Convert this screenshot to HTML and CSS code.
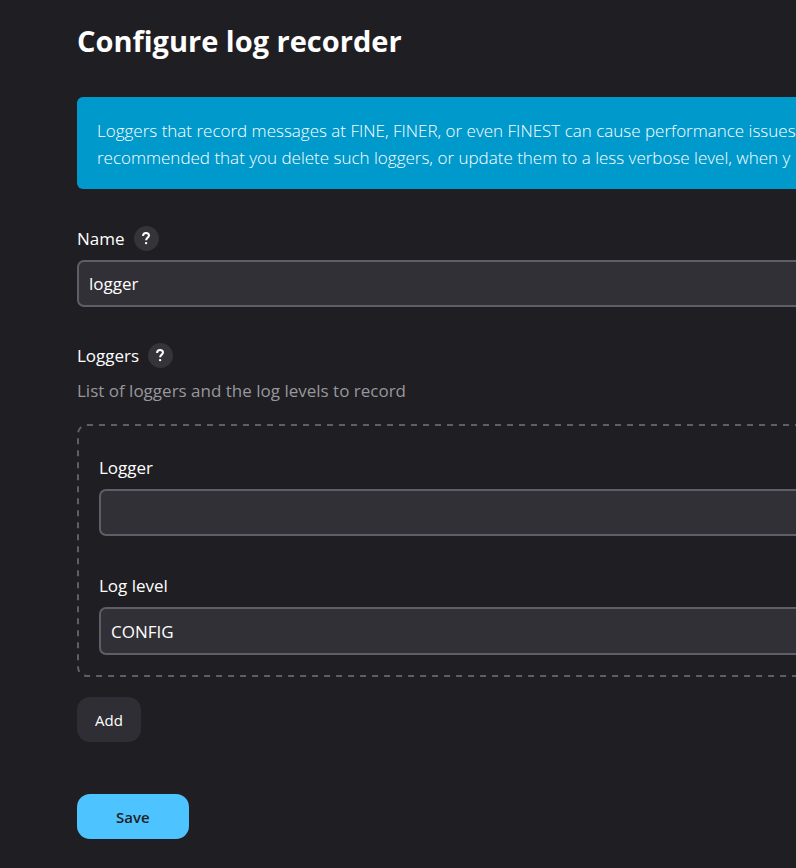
FILE: index.html
```html
<!DOCTYPE html>
<html lang="en">
<head>
<meta charset="utf-8">
<title>Configure log recorder</title>
<link rel="stylesheet" href="styles.css">
</head>
<body>
<main class="page">
  <h1 class="title">Configure log recorder</h1>
  <p class="alert">Loggers that record messages at FINE, FINER, or even FINEST can cause performance issues<br>recommended that you delete such loggers, or update them to a less verbose level, when y</p>
  <form class="form">
    <div class="field">
      <div class="label-row">
        <label for="name">Name</label>
        <button class="help" type="button" aria-label="Help for Name">
          <svg class="help-icon" viewBox="0 0 25 25" aria-hidden="true"><path d="M9.1 10.1V9.8C9.1 8 10.3 6.9 12 6.9S15 8 15 9.5C15 11.6 12.1 11.7 12.1 14.2"/><circle cx="12.1" cy="17.1" r="1.2"/></svg>
        </button>
      </div>
      <input class="control" id="name" type="text" value="logger">
    </div>
    <div class="field" role="group" aria-labelledby="loggers">
      <div class="label-row">
        <span id="loggers">Loggers</span>
        <button class="help" type="button" aria-label="Help for Loggers">
          <svg class="help-icon" viewBox="0 0 25 25" aria-hidden="true"><path d="M9.1 10.1V9.8C9.1 8 10.3 6.9 12 6.9S15 8 15 9.5C15 11.6 12.1 11.7 12.1 14.2"/><circle cx="12.1" cy="17.1" r="1.2"/></svg>
        </button>
      </div>
      <p class="description">List of loggers and the log levels to record</p>
      <div class="repeated">
        <svg class="outline" aria-hidden="true"><rect class="outline-shape" x="1" y="1" rx="9"/></svg>
        <div class="field">
          <div class="label-row"><label for="logger">Logger</label></div>
          <input class="control" id="logger" type="text">
        </div>
        <div class="field">
          <div class="label-row"><label for="level">Log level</label></div>
          <select class="control select" id="level"><option>CONFIG</option></select>
        </div>
      </div>
      <button class="button" type="button">Add</button>
    </div>
    <button class="button primary" type="button">Save</button>
  </form>
</main>
</body>
</html>
```
FILE: styles.css
```css
* { box-sizing: border-box; }

body {
  margin: 0;
  overflow-x: hidden;
  background: #1f1e23;
  color: #fff;
  font: 17px/27px "Open Sans", "Noto Sans", sans-serif;
}

/* The content column runs on past the right edge of the window. */
.page {
  margin-right: -48px;
  padding: 20px 0 29px 77px;
}

.title {
  margin: 0 0 35px;
  font-size: 29px;
  line-height: 42px;
  font-weight: 700;
}

.alert {
  margin: 0 0 36px;
  padding: 20px 20px 18px;
  border-radius: 6px;
  background: #0099cc;
  font-weight: 330;
  white-space: nowrap;
}

.form,
.field {
  display: flex;
  flex-direction: column;
}

.label-row {
  display: flex;
  align-items: center;
  gap: 9px;
  margin-bottom: 8px;
}

.form > .field:first-child { margin-bottom: 35px; }

.help {
  width: 25px;
  height: 25px;
  padding: 0;
  border: 0;
  border-radius: 50%;
  background: #35343a;
}

.help-icon {
  display: block;
  width: 25px;
  height: 25px;
  fill: #fff;
}

.help-icon path {
  fill: none;
  stroke: #fff;
  stroke-width: 2;
}

.control {
  width: 100%;
  height: 47px;
  padding: 0 10px;
  border: 2px solid #5f5d68;
  border-radius: 7px;
  background: #313036;
  color: #fff;
  font: inherit;
}

.select {
  height: 48px;
  appearance: none;
}

.description {
  margin: 0 0 20px;
  color: #98979c;
}

.repeated {
  position: relative;
  display: flex;
  flex-direction: column;
  gap: 36px;
  margin-bottom: 20px;
  padding: 30px 22px 22px;
}

.outline {
  position: absolute;
  inset: 0;
  width: 100%;
  height: 100%;
  pointer-events: none;
}

.outline-shape {
  width: calc(100% - 2px);
  height: calc(100% - 2px);
  fill: none;
  stroke: #5f5d68;
  stroke-width: 2;
  stroke-dasharray: 6 6;
}

.button {
  align-self: flex-start;
  height: 45px;
  padding: 0 18px;
  border: 0;
  border-radius: 13px;
  background: #2f2e34;
  color: #fff;
  font: 400 15px/24px "Open Sans", "Noto Sans", sans-serif;
}

.primary {
  margin-top: 52px;
  padding: 0 39px;
  background: #4dc4ff;
  color: #1f1e23;
  font-weight: 600;
}
```
